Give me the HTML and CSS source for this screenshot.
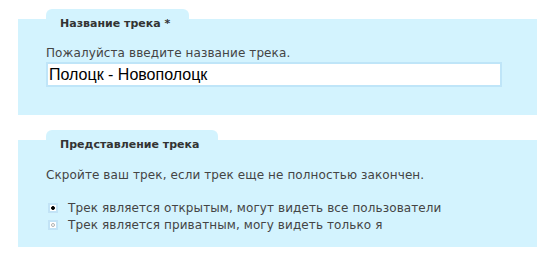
FILE: index.html
```html
<html>
<head>
<title>Трек</title>
<link rel="stylesheet" href="styles.css">
</head>
<body>

<div class="group">
  <div class="legend legendName"><span>Название трека *</span></div>
  <div class="panel panelName">
    <div class="desc">Пожалуйста введите название трека.</div>
    <input class="text" type="text" value="Полоцк - Новополоцк">
  </div>
</div>

<div class="group groupView">
  <div class="legend legendView"><span>Представление трека</span></div>
  <div class="panel panelView">
    <div class="desc">Скройте ваш трек, если трек еще не полностью закончен.</div>
    <div class="radios">
      <div class="radio"><span class="box checked"></span><span>Трек является открытым, могут видеть все пользователи</span></div>
      <div class="radio"><span class="box"></span><span>Трек является приватным, могу видеть только я</span></div>
    </div>
  </div>
</div>

</body>
</html>
```

FILE: styles.css
```css
body {
  margin: 0;
  background-color: #ffffff;
  font-family: "DejaVu Sans", sans-serif;
}

.group {
  margin: 9px 0 0 18px;
}

.groupView {
  margin-top: 15px;
}

.legend {
  margin-left: 28px;
  height: 10px;
  background-color: #d3f3fe;
  border-radius: 6px 6px 0 0;
}

.legendName {
  width: 143px;
}

.legendView {
  width: 172px;
}

.legend span {
  display: block;
  padding: 8px 0 0 14px;
  font-size: 11px;
  line-height: 13px;
  font-weight: bold;
  color: #333333;
  white-space: nowrap;
}

.panel {
  background-color: #d3f3fe;
  box-sizing: border-box;
  padding: 27px 0 0 28px;
}

.panelName {
  height: 96px;
}

.panelView {
  height: 107px;
  padding-top: 28px;
}

.desc {
  font-size: 12px;
  line-height: 14px;
  letter-spacing: 0.1px;
  color: #444444;
  white-space: nowrap;
}

.text {
  display: block;
  margin-top: 2px;
  width: 456px;
  height: 25px;
  box-sizing: border-box;
  border: 2px solid #bfe5f8;
  padding: 0 1px;
  background-color: #ffffff;
  font-family: "Liberation Sans", sans-serif;
  font-size: 16px;
  color: #000000;
  outline: none;
}

.radios {
  margin-top: 17px;
}

.radio {
  display: flex;
  align-items: center;
  gap: 10px;
  height: 17px;
  font-size: 12px;
  letter-spacing: 0.1px;
  color: #444444;
  white-space: nowrap;
}

.box {
  margin-left: 2px;
  width: 10px;
  height: 10px;
  box-sizing: border-box;
  border: 2px solid #c2e3f6;
  background-color: #ffffff;
  display: flex;
  align-items: center;
  justify-content: center;
}

.box:after {
  content: '';
  width: 4px;
  height: 4px;
  box-sizing: border-box;
  border-radius: 50%;
  border: 1px solid #b0b0b0;
}

.box.checked:after {
  background-color: #000000;
  border-color: #000000;
}
```
